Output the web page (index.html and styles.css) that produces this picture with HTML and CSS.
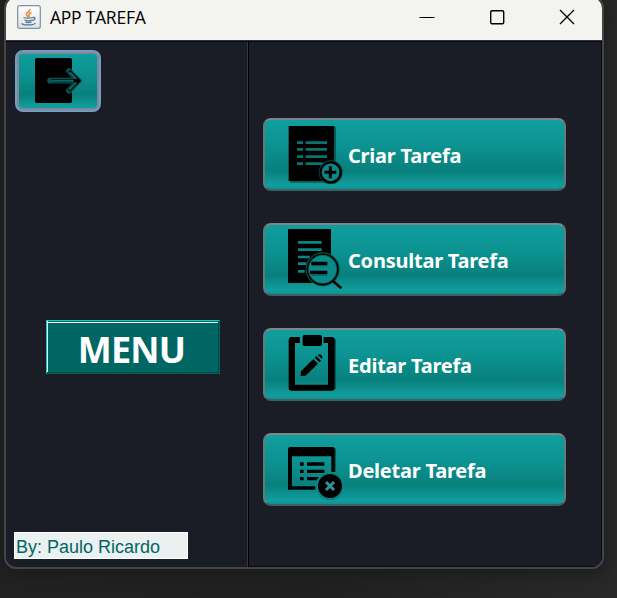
FILE: index.html
```html
<!DOCTYPE html>
<html lang="pt">
<head>
<meta charset="utf-8">
<title>APP TAREFA</title>
<link rel="stylesheet" href="styles.css">
</head>
<body>
<div class="window">
  <header class="titlebar">
    <svg class="java" viewBox="0 0 24 24">
      <defs><linearGradient id="tile" x2="0" y2="1"><stop stop-color="#fff"/><stop offset="1" stop-color="#dfe3e7"/></linearGradient></defs>
      <rect x=".7" y=".7" width="22.6" height="22.6" rx="2" fill="url(#tile)" stroke="#7e91a3" stroke-width="1.2"/>
      <path d="M12.8 4c1 2-4.300 3.500-3.500 5.500.3 1 1.300 1.500 1.700 2.300M14.500 7.500c-2.500 1-3.500 2-2.300 3.200.5.600 0 1.200-.5 1.600" fill="none" stroke="#ed8b35" stroke-width="1.500"/>
      <path d="M6.500 12.500c2 .9 7 .8 9.500 0M7.500 15c2 .8 6 .8 8 0M8.500 17.200c2 .6 4 .6 6 0M16 12.500c3-.7 2.500 2.300-.5 3M4.500 18.500c2 2 12 2 14-.4" fill="none" stroke="#547992" stroke-width="1.300"/>
    </svg>
    <h1 class="title">APP TAREFA</h1>
    <div class="controls">
      <svg viewBox="0 0 16 16"><path d="M.5 8.500h15" stroke="#000"/></svg>
      <svg viewBox="0 0 16 16"><rect x="1.700" y="1.700" width="13" height="13" rx="1.300" fill="none" stroke="#000" stroke-width="1.400"/></svg>
      <svg viewBox="0 0 16 16"><path d="M1 1l14 14M15 1L1 15" stroke="#000" stroke-width="1.300"/></svg>
    </div>
  </header>
  <main class="content">
    <aside class="side">
      <button class="exit" aria-label="Sair">
        <svg viewBox="45 150 258 186">
          <rect x="105" y="174" width="111" height="135" rx="5"/>
          <path d="M150 242h82M207 213l29 29-29 30" fill="none" stroke="#075352" stroke-width="17" stroke-linecap="round"/>
          <path d="M154 242h78M207 213l29 29-29 30" fill="none" stroke="#000" stroke-width="10"/>
          <path d="M153 242h68M208 216l21 21M208 268l21-21" fill="none" stroke="#086765" stroke-width="6"/>
        </svg>
      </button>
      <div class="menu">MENU</div>
      <div class="author">By: Paulo Ricardo</div>
    </aside>
    <nav class="actions">
      <button class="action">
        <svg viewBox="90 24 180 219">
          <path d="M105 50h138v168h-138z" fill="#075b59"/><path d="M101 48h136v165h-136z"/>
          <path d="M126 98h18m8 0h64M126 118h18m8 0h64M126 140h18m8 0h64M126 161h18m8 0h54" stroke="#087472" stroke-width="8"/>
          <circle cx="227" cy="187" r="36" fill="#064644"/><circle cx="227" cy="187" r="30" fill="#0a8886" stroke="#000" stroke-width="7"/>
          <path d="M208 187h36m-18-18v36" stroke="#000" stroke-width="9"/>
        </svg>
        <span>Criar Tarefa</span>
      </button>
      <button class="action">
        <svg viewBox="90 24 180 219">
          <path d="M99 42h129v162H99z"/>
          <path d="M129 82h71M129 104h71M129 126h35M129 146h25M129 169h20" stroke="#0a8582" stroke-width="8"/>
          <circle cx="203" cy="163" r="46" fill="#0a8a88" stroke="#075b59" stroke-width="10"/>
          <circle cx="203" cy="163" r="46" fill="none" stroke="#000" stroke-width="5"/>
          <path d="M169 145h48M165 172h52" stroke="#000" stroke-width="10"/><path d="M171 152h46M169 180h48" stroke="#075b59" stroke-width="4"/>
          <path d="M233 197l26 23" stroke="#000" stroke-width="8"/>
        </svg>
        <span>Consultar Tarefa</span>
      </button>
      <button class="action">
        <svg viewBox="90 24 180 219">
          <path d="M235 54q8 0 8 8v145h-8z" fill="#075b59"/>
          <path d="M135 51h-25q-9 0-9 9v144q0 8 9 8h120q9 0 9-8V60q0-9-9-9h-24v18h13v125h-99V69h15z"/>
          <rect x="143" y="45" width="58" height="33" rx="5"/>
          <path d="M138 154l37-37 14 14-37 36-15 1zM179 113l5-5 14 14-5 5zM188 105q5-5 11 0 6 6 1 11z"/>
        </svg>
        <span>Editar Tarefa</span>
      </button>
      <button class="action">
        <svg viewBox="90 24 180 219">
          <path d="M237 68q6 0 6 5v68h-7z" fill="#075b59"/>
          <path d="M106 66h126q7 0 7 7v68h-10V94H111v90h70v10H99V73q0-7 7-7z"/>
          <path d="M135 117h11m10 0h52M135 139h11m10 0h52M135 161h11m10 0h36" stroke="#000" stroke-width="10"/>
          <circle cx="225" cy="183" r="43" fill="#0a8583"/><circle cx="225" cy="183" r="36"/>
          <path d="M213 171l24 24m0-24l-24 24" stroke="#2b9795" stroke-width="9"/>
        </svg>
        <span>Deletar Tarefa</span>
      </button>
    </nav>
  </main>
</div>
</body>
</html>
```
FILE: styles.css
```css
* { box-sizing: border-box; }
body {
  margin: 0;
  height: 598px;
  overflow: hidden;
  background: linear-gradient(90deg, #222 0, #202020 50%, #292929 100%);
  font-family: "Noto Sans", "Open Sans", sans-serif;
}
.window {
  width: 600px;
  height: 573px;
  margin: -4px 0 0 4px;
  border: 2px solid #454545;
  border-radius: 12px;
  overflow: hidden;
  background: #1b1d26;
  box-shadow: 0 4px 18px #1a1a1a;
}
.titlebar {
  height: 42px;
  padding: 2px 27px 0 10px;
  display: flex;
  align-items: center;
  background: #f3f3ef;
}
.java { width: 26px; height: 24px; margin-top: -6px; }
.title {
  margin: -6px 0 0 8px;
  font-family: "Open Sans", sans-serif;
  font-size: 17.5px;
  font-weight: 400;
  letter-spacing: -0.25px;
  line-height: 24px;
  color: #000;
}
.controls { margin: -7px 0 0 auto; display: flex; gap: 54px; }
.controls svg { width: 16px; height: 16px; }
.content {
  height: 527px;
  display: grid;
  grid-template-columns: 243px 1fr;
  border-top: 1px solid #2c3442;
}
.side {
  display: flex;
  flex-direction: column;
  align-items: flex-start;
  padding: 8px 0 8px 8px;
  border-right: 1px solid #000;
  border-top: 1px solid #08090d;
  box-shadow: inset -1px 0 #343846;
}
button {
  padding: 0;
  font: inherit;
  background: linear-gradient(#109e9e 0, #0c9492 35%, #08807d 73%, #109e9e 95%, #0e9292 100%);
}
.exit {
  width: 86px;
  height: 62px;
  margin-left: 1px;
  border: 2px solid #739bcb;
  border-radius: 8px;
  box-shadow: inset 0 0 0 2px #7c8c90;
}
.exit svg { display: block; width: 86px; height: 62px; margin: -2px; }
.menu {
  width: 174px;
  height: 54px;
  margin: 208px 0 0 32px;
  border: 1px solid #006461;
  border-top-color: #00d1cd;
  border-left-color: #00d1cd;
  background: #006663;
  box-shadow: inset -1px -1px #004946, inset 1px 0 #fff, inset 0 1px #006663, inset 0 2px #fff;
  color: #fff;
  font: 700 36px/58px "Noto Sans", sans-serif;
  letter-spacing: -0.8px;
  text-align: center;
  padding-right: 3px;
}
.author {
  width: 174px;
  height: 27px;
  margin-top: auto;
  padding-left: 1px;
  border: 1px solid #fff;
  background: #ebf0f0;
  color: #006663;
  font: 18px/28px "Liberation Sans", sans-serif;
}
.actions {
  padding: 76px 0 0 14px;
  display: flex;
  flex-direction: column;
  gap: 32px;
  border: 1px solid #07080b;
  border-left: 0;
}
.action {
  width: 303px;
  height: 73px;
  flex: none;
  display: flex;
  align-items: center;
  border: 2px solid #637a7d;
  border-top-color: #7d8789;
  border-bottom-color: #405f63;
  border-radius: 8px;
  color: #fff;
}
.action svg { width: 60px; height: 73px; margin: -2px 3px -2px 20px; }
.action span { font-size: 20px; font-weight: 700; line-height: 28px; letter-spacing: -0.23px; padding-top: 2px; }
```
